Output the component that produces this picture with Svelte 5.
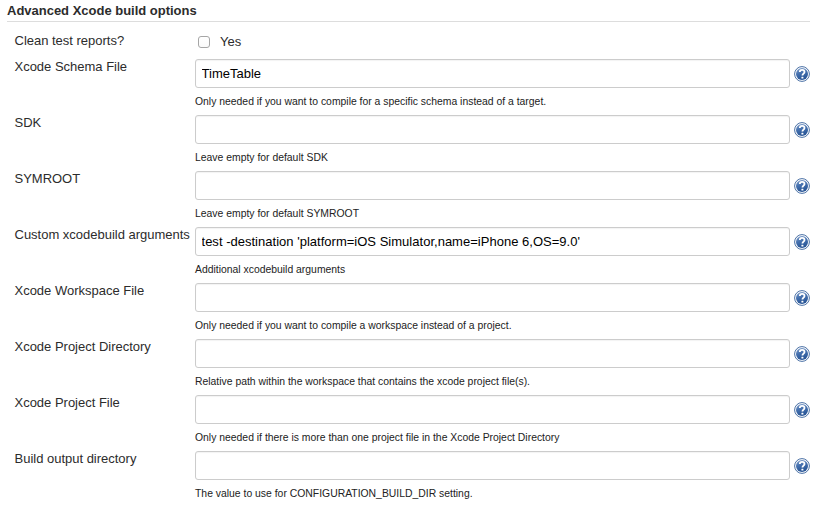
<script>
  let clean = $state(false);
  let rows = $state([
    { label: 'Xcode Schema File', value: 'TimeTable', note: 'Only needed if you want to compile for a specific schema instead of a target.' },
    { label: 'SDK', value: '', note: 'Leave empty for default SDK' },
    { label: 'SYMROOT', value: '', note: 'Leave empty for default SYMROOT' },
    { label: 'Custom xcodebuild arguments', value: "test -destination 'platform=iOS Simulator,name=iPhone 6,OS=9.0'", note: 'Additional xcodebuild arguments' },
    { label: 'Xcode Workspace File', value: '', note: 'Only needed if you want to compile a workspace instead of a project.' },
    { label: 'Xcode Project Directory', value: '', note: 'Relative path within the workspace that contains the xcode project file(s).' },
    { label: 'Xcode Project File', value: '', note: 'Only needed if there is more than one project file in the Xcode Project Directory' },
    { label: 'Build output directory', value: '', note: 'The value to use for CONFIGURATION_BUILD_DIR setting.' }
  ]);
</script>

<form class="options">
  <h2>Advanced Xcode build options</h2>
  <div class="check-row">
    <span class="label">Clean test reports?</span>
    <label class="check"><input type="checkbox" bind:checked={clean} /><span>Yes</span></label>
  </div>
  {#each rows as row, i}
    <div class="row">
      <label class="label" for="field-{i}">{row.label}</label>
      <div class="field">
        <input id="field-{i}" type="text" bind:value={row.value} spellcheck="false" />
        <p>{row.note}</p>
      </div>
      <svg class="help" width="16" height="16" viewBox="0 0 16 16" aria-label="Help">
        <defs>
          <linearGradient id="blue-{i}" x1="0" y1="0" x2="0.3" y2="1">
            <stop offset="0" stop-color="#86a3cd" />
            <stop offset="0.5" stop-color="#4470ae" />
            <stop offset="1" stop-color="#285596" />
          </linearGradient>
        </defs>
        <circle cx="8" cy="8" r="7.4" fill="#fff" stroke="#4a70a5" stroke-width="1" />
        <circle cx="8" cy="8" r="6" fill="url(#blue-{i})" />
        <path d="M5.8 6.1C5.8 4.6 6.7 3.9 8.1 3.9c1.4 0 2.4.7 2.4 2 0 1.6-2.1 1.8-2.1 3.6" fill="none" stroke="#fff" stroke-width="1.8" />
        <rect x="7.4" y="10.7" width="2" height="1.9" rx=".4" fill="#fff" />
      </svg>
    </div>
  {/each}
</form>

<style>
  :global(body) {
    background: #fff;
  }
  .options {
    box-sizing: border-box;
    width: 825px;
    height: 511px;
    overflow: hidden;
    padding: 0 15px 0 7px;
    font-family: "Liberation Sans", Arial, sans-serif;
    font-size: 13px;
    line-height: 16px;
    color: #2c2c2c;
  }
  h2 {
    box-sizing: border-box;
    height: 22px;
    margin: 0 0 11px;
    padding-top: 3px;
    border-bottom: 1px solid #ddd;
    font-size: 13px;
    line-height: 16px;
    letter-spacing: -0.01px;
  }
  .check-row,
  .row {
    display: flex;
    align-items: flex-start;
    padding-left: 7.5px;
  }
  .check-row {
    height: 26px;
  }
  .row {
    height: 56px;
  }
  .label {
    flex: 0 0 180.5px;
    white-space: nowrap;
    letter-spacing: -0.01px;
  }
  .check {
    display: flex;
    align-items: center;
    gap: 10px;
    padding: 1px 0 0 3px;
  }
  .check input {
    appearance: none;
    box-sizing: border-box;
    width: 12px;
    height: 12px;
    margin: 0;
    border: 1px solid #a6a6a6;
    border-radius: 3px;
    background: linear-gradient(#fff, #fafafa);
  }
  .check input:checked {
    background: #3b66a6;
  }
  .field {
    width: 595px;
  }
  .field input {
    display: block;
    box-sizing: border-box;
    width: 595px;
    height: 29px;
    margin: 0;
    padding: 0 5.5px;
    border: 1px solid #ccc;
    border-radius: 3px;
    box-shadow: inset 0 1px 1px rgba(0, 0, 0, 0.05);
    background: #fff;
    font: inherit;
    letter-spacing: 0.015px;
    color: #000;
    outline: none;
  }
  .field p {
    margin: 7px 0 0;
    font-size: 10.4px;
    line-height: 13px;
    white-space: nowrap;
    color: #222;
  }
  .help {
    margin: 7px 0 0 4px;
  }
</style>
